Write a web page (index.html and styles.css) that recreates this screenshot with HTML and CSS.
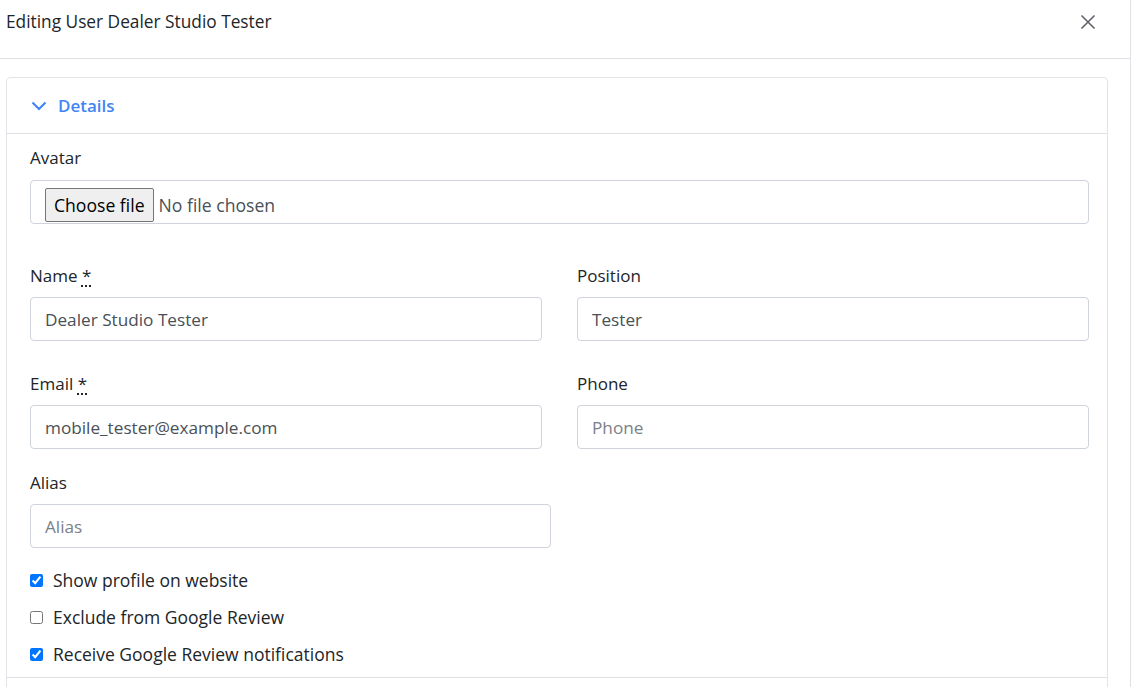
FILE: index.html
```html
<!DOCTYPE html>
<html lang="en">
<head>
<meta charset="utf-8">
<title>Editing User</title>
<link rel="stylesheet" href="styles.css">
</head>
<body>
<div class="modal">
  <div class="modal-header">
    <h5 class="modal-title">Editing User Dealer Studio Tester</h5>
    <button class="close" type="button" aria-label="Close">
      <svg width="16" height="16" viewBox="0 0 16 16"><path d="M1.5 1.5 L14.5 14.5 M14.5 1.5 L1.5 14.5" stroke="#5f6368" stroke-width="1.6" fill="none"/></svg>
    </button>
  </div>
  <div class="modal-body">
    <div class="card">
      <div class="card-header">
        <svg class="chev" width="16" height="10" viewBox="0 0 16 10"><path d="M1.5 1.5 L8 8 L14.5 1.5" stroke="#4285f4" stroke-width="2.2" fill="none"/></svg>
        <span>Details</span>
      </div>
      <div class="card-body">
        <div class="group group-avatar">
          <label class="lbl">Avatar</label>
          <div class="file-box">
            <span class="file-btn">Choose file</span>
            <span class="file-text">No file chosen</span>
          </div>
        </div>
        <div class="row row-name">
          <div class="col">
            <label class="lbl">Name <abbr class="req" title="required">*</abbr></label>
            <input class="ctl" type="text" value="Dealer Studio Tester">
          </div>
          <div class="col">
            <label class="lbl">Position</label>
            <input class="ctl" type="text" value="Tester">
          </div>
        </div>
        <div class="row row-email">
          <div class="col">
            <label class="lbl">Email <abbr class="req" title="required">*</abbr></label>
            <input class="ctl" type="text" value="mobile_tester@example.com">
          </div>
          <div class="col">
            <label class="lbl">Phone</label>
            <input class="ctl" type="text" placeholder="Phone">
          </div>
        </div>
        <div class="group group-alias">
          <label class="lbl">Alias</label>
          <input class="ctl ctl-alias" type="text" placeholder="Alias">
        </div>
        <label class="check"><input type="checkbox" checked><span>Show profile on website</span></label>
        <label class="check"><input type="checkbox"><span>Exclude from Google Review</span></label>
        <label class="check"><input type="checkbox" checked><span>Receive Google Review notifications</span></label>
      </div>
      <div class="card-footer"></div>
    </div>
  </div>
</div>
</body>
</html>
```

FILE: styles.css
```css
* { box-sizing: border-box; }
html, body { margin: 0; padding: 0; background: #fff; }
body {
  font-family: "Open Sans", "Noto Sans", "Liberation Sans", sans-serif;
  font-size: 17px;
  color: #212529;
  overflow: hidden;
}
.modal {
  width: 1131px;
  height: 687px;
  border-right: 1px solid #dee2e6;
  background: #fff;
}
.modal-header {
  height: 59px;
  border-bottom: 1px solid #dee2e6;
  display: flex;
  align-items: flex-start;
  justify-content: space-between;
  padding: 10px 34px 0 6px;
}
.modal-title {
  margin: 0;
  font-size: 17.3px;
  font-weight: 400;
  line-height: 24px;
  color: #212529;
}
.close {
  border: 0;
  background: transparent;
  padding: 0;
  margin-top: 4px;
  width: 16px;
  height: 16px;
  cursor: pointer;
}
.close svg { display: block; }
.modal-body {
  padding: 18px 22px 0 6px;
}
.card {
  border: 1px solid #e1e4e8;
  border-radius: 5px;
  border-bottom: 0;
  border-bottom-left-radius: 0;
  border-bottom-right-radius: 0;
}
.card-header {
  height: 56px;
  border-bottom: 1px solid #dee2e6;
  display: flex;
  align-items: center;
  padding-left: 24px;
  color: #4285f4;
  font-weight: 600;
  font-size: 17px;
}
.chev { margin-right: 11px; margin-top: 1px; }
.card-body {
  padding: 12px 18px 11px 23px;
}
.lbl {
  display: block;
  line-height: 24px;
  margin-bottom: 9px;
  color: #212529;
}
.group-avatar .lbl { margin-bottom: 10px; }
.req {
  text-decoration: underline dotted;
  text-decoration-thickness: 2px;
  text-underline-offset: 3px;
  border: 0;
  cursor: help;
}
.group-avatar { margin-bottom: 40px; }
.file-box {
  height: 44px;
  border: 1px solid #ced4da;
  border-radius: 4px;
  display: flex;
  align-items: flex-start;
  padding: 7px 0 0 14px;
}
.file-btn {
  height: 34px;
  display: inline-flex;
  align-items: center;
  padding: 0 8px;
  background: #efefef;
  border: 1px solid #767676;
  border-radius: 2px;
  color: #000;
  font-size: 17.6px;
}
.file-text {
  margin-left: 5px;
  line-height: 34px;
  color: #495057;
  font-size: 17.6px;
}
.row {
  display: grid;
  grid-template-columns: 1fr 1fr;
  column-gap: 35px;
}
.row-name { margin-bottom: 31px; }
.row-email { margin-bottom: 22px; }
.ctl {
  display: block;
  width: 100%;
  height: 44px;
  border: 1px solid #ced4da;
  border-radius: 4px;
  padding: 0 14px;
  font-family: inherit;
  font-size: 17.2px;
  color: #495057;
  background: #fff;
  outline: none;
}
.ctl::placeholder { color: #7a8188; }
.group-alias { margin-bottom: 20px; }
.ctl-alias { width: 521px; }
.check {
  display: flex;
  align-items: center;
  height: 24px;
  margin-bottom: 13px;
  color: #212529;
  font-size: 17.5px;
}
.check:last-child { margin-bottom: 0; }
.check input {
  width: 13px;
  height: 13px;
  margin: 0 10px 0 0;
}
.card-footer {
  border-top: 1px solid #dee2e6;
  height: 20px;
}
```
